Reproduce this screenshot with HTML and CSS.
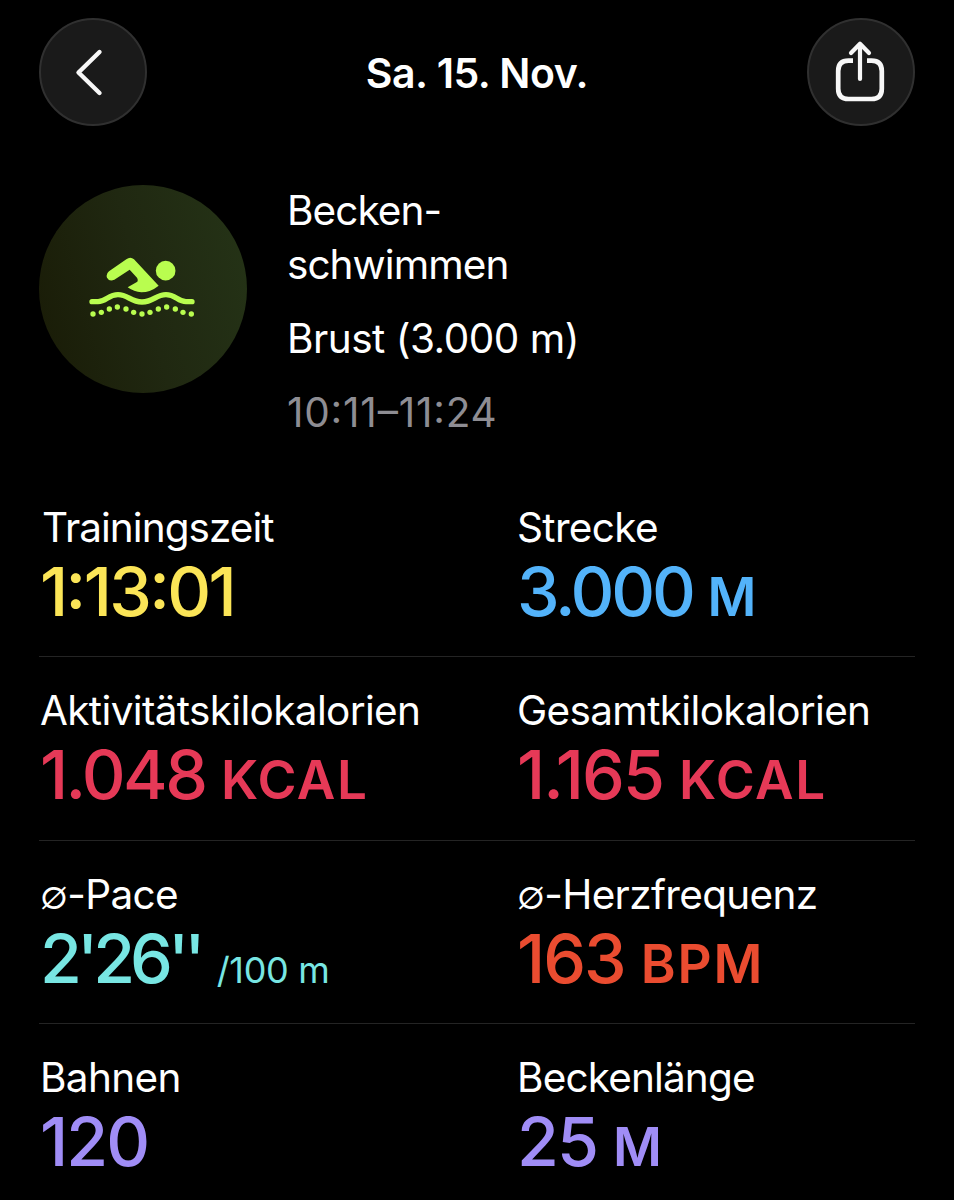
FILE: index.html
```
<!DOCTYPE html>
<html lang="de">
<head>
  <meta charset="UTF-8">
  <title>Training</title>
  <link rel="stylesheet" href="styles.css">
</head>
<body>
  <header class="topbar">
    <button class="round-btn" aria-label="Zurück">
      <svg width="106" height="106" viewBox="0 0 106 106">
        <path d="M59.5 33 L38.5 53.5 L59.5 74" fill="none" stroke="#f7f7f7" stroke-width="4.4" stroke-linecap="round" stroke-linejoin="round"/>
      </svg>
    </button>
    <h1 class="title">Sa. 15. Nov.</h1>
    <button class="round-btn" aria-label="Teilen">
      <svg width="106" height="106" viewBox="0 0 106 106" fill="none" stroke="#f7f7f7">
        <path d="M45 41.6 H40.5 Q30.2 41.6 30.2 51.9 V69.7 Q30.2 80 40.5 80 H63.5 Q73.8 80 73.8 69.7 V51.9 Q73.8 41.6 63.5 41.6 H59" stroke-width="4.7"/>
        <path d="M52 60 V25 M43 34 L52 24.8 L61 34" stroke-width="4.2" stroke-linecap="round" stroke-linejoin="round"/>
      </svg>
    </button>
  </header>

  <section class="workout">
    <div class="workout-icon">
      <svg width="106.67" height="60.67" viewBox="0 0 320 182" fill="#b9fd4f">
        <circle cx="230" cy="41" r="29.5"/>
        <path d="M60 43 L112 7 Q124 -2 135 7 L209 86 Q184 106 157 106 Q135 105 116 91 L145 74 Q148 68 144 62 L122 38 L76 68 Q61 75 54 62 Q50 51 60 43 Z"/>
        <path d="M9 134 H27 C52 134 58 113 87 113 C118 113 124 135 159 135 C194 135 200 113 231 113 C260 113 266 134 291 134 H309" fill="none" stroke="#b9fd4f" stroke-width="16" stroke-linecap="round"/>
        <circle cx="12" cy="171" r="8"/>
        <circle cx="37" cy="166" r="8"/>
        <circle cx="61" cy="156" r="8"/>
        <circle cx="85" cy="150" r="8"/>
        <circle cx="111" cy="156" r="8"/>
        <circle cx="134" cy="166" r="8"/>
        <circle cx="159" cy="171" r="8"/>
        <circle cx="183" cy="166" r="8"/>
        <circle cx="208" cy="156" r="8"/>
        <circle cx="233" cy="150" r="8"/>
        <circle cx="259" cy="156" r="8"/>
        <circle cx="282" cy="166" r="8"/>
        <circle cx="307" cy="171" r="8"/>
      </svg>
    </div>
    <div class="workout-info">
      <div class="name">Becken-<br>schwimmen</div>
      <div class="style">Brust (3.000 m)</div>
      <div class="time">10:11–11:24</div>
    </div>
  </section>

  <main class="metrics">
    <div class="row">
      <div class="metric yellow">
        <div class="label duration">Trainingszeit</div>
        <div class="value clock">1:13:01</div>
      </div>
      <div class="metric blue">
        <div class="label">Strecke</div>
        <div class="value">3.000 <span class="unit">M</span></div>
      </div>
    </div>
    <div class="row">
      <div class="metric red">
        <div class="label">Aktivitätskilokalorien</div>
        <div class="value active">1.048 <span class="unit">KCAL</span></div>
      </div>
      <div class="metric red">
        <div class="label">Gesamtkilokalorien</div>
        <div class="value">1.165 <span class="unit">KCAL</span></div>
      </div>
    </div>
    <div class="row">
      <div class="metric cyan">
        <div class="label"><span class="avg">∅</span>-Pace</div>
        <div class="value">2'26'' <span class="per">/100 m</span></div>
      </div>
      <div class="metric orange">
        <div class="label"><span class="avg">∅</span>-Herzfrequenz</div>
        <div class="value">163 <span class="unit bpm">BPM</span></div>
      </div>
    </div>
    <div class="row">
      <div class="metric purple">
        <div class="label">Bahnen</div>
        <div class="value">120</div>
      </div>
      <div class="metric purple">
        <div class="label pool">Beckenlänge</div>
        <div class="value">25 <span class="unit">M</span></div>
      </div>
    </div>
  </main>
</body>
</html>
```
FILE: styles.css
```
* {
  box-sizing: border-box;
}

body {
  margin: 0;
  height: 1200px;
  overflow: hidden;
  background: #000;
  color: #fff;
  font-family: Inter, "Liberation Sans", sans-serif;
  font-size: 40.5px;
}

.topbar {
  display: flex;
  justify-content: space-between;
  align-items: center;
  padding: 18px 39px 0;
}

.round-btn {
  width: 108px;
  height: 108px;
  padding: 0;
  border: 2px solid #303030;
  border-radius: 50%;
  background: #1a1a1a;
  display: flex;
  align-items: center;
  justify-content: center;
}

.round-btn svg {
  flex: none;
}

.title {
  margin: 1px 0 0;
  font-size: 41px;
  font-weight: 600;
  letter-spacing: -0.5px;
}

.workout {
  display: flex;
  gap: 40px;
  padding: 58px 39px 0;
}

.workout-icon {
  width: 208px;
  height: 208px;
  margin-top: 1px;
  padding: 0 2px 4px 0;
  border-radius: 50%;
  background: linear-gradient(75deg, #191b06, #202811 50%, #253417);
  display: flex;
  align-items: center;
  justify-content: center;
}

.workout-info {
  line-height: 54px;
  letter-spacing: -0.5px;
}

.name {
  letter-spacing: -0.95px;
}

.style,
.time {
  margin-top: 20px;
}

.time {
  color: #8e8d93;
  letter-spacing: 0.8px;
  font-feature-settings: "case";
}

.metrics {
  padding: 34px 39px 0;
}

.row {
  display: grid;
  grid-template-columns: 477px 1fr;
  height: 183.4px;
  padding-top: 30px;
  border-bottom: 1px solid #242424;
}

.row:last-child {
  border-bottom: none;
}

.label {
  padding-left: 1px;
  line-height: 48px;
  letter-spacing: -0.65px;
}

.duration {
  padding-left: 3px;
  letter-spacing: -0.95px;
}

.pool {
  letter-spacing: -0.85px;
}

.value {
  margin-top: -1px;
  padding-left: 1px;
  font-size: 68px;
  line-height: 80px;
  font-weight: 500;
  letter-spacing: -2px;
  white-space: nowrap;
}

.clock {
  letter-spacing: -2.6px;
  font-feature-settings: "case";
}

.active {
  letter-spacing: -2.6px;
}

.blue .value {
  letter-spacing: -3.2px;
}

.cyan .value {
  letter-spacing: -5px;
}

.unit {
  font-size: 53px;
  font-weight: 600;
  letter-spacing: 1.5px;
}

.bpm {
  letter-spacing: 1.8px;
}

.cyan .per {
  margin-left: 3px;
  font-size: 36px;
  font-weight: 400;
  letter-spacing: -0.3px;
}

.avg {
  font-weight: 300;
}

.yellow .value { color: #fbe557; }
.blue .value { color: #53b3fa; }
.red .value { color: #e63957; }
.cyan .value { color: #78e6e3; }
.orange .value { color: #ea4c30; }
.purple .value { color: #a08df6; }
```
